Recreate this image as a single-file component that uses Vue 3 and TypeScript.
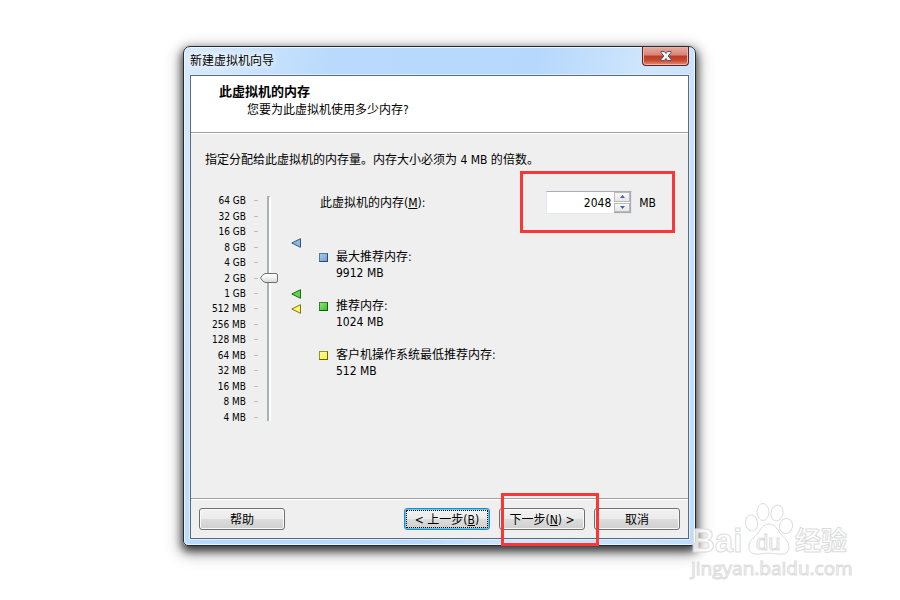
<script setup lang="ts">
import { computed, ref } from 'vue'

const labels = ['64 GB', '32 GB', '16 GB', '8 GB', '4 GB', '2 GB', '1 GB', '512 MB', '256 MB', '128 MB', '64 MB', '32 MB', '16 MB', '8 MB', '4 MB']
const legend = [
  { key: 'blue', name: '最大推荐内存:', value: 9912 },
  { key: 'green', name: '推荐内存:', value: 1024 },
  { key: 'yellow', name: '客户机操作系统最低推荐内存:', value: 512 },
]
const memory = ref(2048)

// The scale is logarithmic: 64 GB (2^16 MB) in the first row, 4 MB (2^2 MB) in the last.
function place(mb: number): string {
  const row = Math.min(14, Math.max(0, 16 - Math.log2(mb || 4)))
  return `${((row + 0.5) / 15) * 100}%`
}
const power = computed({
  get: () => Math.log2(memory.value || 4),
  set: (v: number) => { memory.value = 2 ** v },
})
function step(delta: number) {
  memory.value = Math.min(65536, Math.max(4, memory.value + delta))
}
</script>

<template>
  <main class="page">
    <section class="window">
      <header class="titlebar">
        <h1>新建虚拟机向导</h1>
        <button class="close" type="button" aria-label="关闭">
          <svg width="12" height="10" viewBox="0 0 12 10">
            <path d="M1 .5H4.4L6 2.5 7.6.5H11V1.5L8.2 5 11 8.5V9.5H7.6L6 7.5 4.4 9.5H1V8.5L3.8 5 1 1.5Z" fill="#f6f6f6" stroke="#51536a" />
          </svg>
        </button>
      </header>
      <div class="client">
        <div class="heading">
          <h2>此虚拟机的内存</h2>
          <p>您要为此虚拟机使用多少内存?</p>
        </div>
        <div class="body">
          <p class="intro">指定分配给此虚拟机的内存量。内存大小必须为 4 MB 的倍数。</p>
          <div class="columns">
            <div class="scale">
              <ul class="labels">
                <li v-for="l in labels" :key="l">{{ l }}</li>
              </ul>
              <div class="slider">
                <div class="track"></div>
                <svg class="thumb" :style="{ top: place(memory) }" width="20" height="12" viewBox="0 0 20 12">
                  <defs>
                    <linearGradient id="thumb-fill" x1="0" y1="0" x2="0" y2="1">
                      <stop offset="0" stop-color="#fff" />
                      <stop offset=".5" stop-color="#f2f2f2" />
                      <stop offset="1" stop-color="#d4d4d4" />
                    </linearGradient>
                  </defs>
                  <path d="M6 1.5H17Q18.500 1.500 18.500 3V9Q18.500 10.500 17 10.500H6Q3 9 1.500 6Q3 3 6 1.500Z" fill="url(#thumb-fill)" stroke="#717171" />
                </svg>
                <input v-model.number="power" type="range" min="2" max="16" step="1" aria-label="内存">
              </div>
              <div class="markers">
                <svg v-for="m in legend" :key="m.key" :class="['marker', m.key]" :style="{ top: place(m.value) }" width="10" height="10" viewBox="0 0 10 10">
                  <path d="M9.500 .7V9.300L.8 5Z" />
                </svg>
              </div>
            </div>
            <div class="info">
              <div class="field">
                <label for="memory">此虚拟机的内存(<u>M</u>):</label>
                <div class="amount">
                  <span class="spin">
                    <input id="memory" v-model.number="memory" type="text">
                    <span class="arrows">
                      <button type="button" aria-label="增加" @click="step(4)"><svg width="5" height="3" viewBox="0 0 5 3"><path d="M0 3L2.500 0 5 3Z" /></svg></button>
                      <button type="button" aria-label="减少" @click="step(-4)"><svg width="5" height="3" viewBox="0 0 5 3"><path d="M0 0L2.500 3 5 0Z" /></svg></button>
                    </span>
                  </span>
                  <span>MB</span>
                </div>
              </div>
              <ul class="legend">
                <li v-for="m in legend" :key="m.key">
                  <i :class="['swatch', m.key]"></i>
                  <p>{{ m.name }}<br>{{ m.value }} MB</p>
                </li>
              </ul>
            </div>
          </div>
        </div>
        <footer class="footer">
          <button class="btn" type="button">帮助</button>
          <div class="actions">
            <button class="btn current" type="button">&lt; 上一步(<u>B</u>)</button>
            <span class="next"><button class="btn" type="button">下一步(<u>N</u>) &gt;</button></span>
            <button class="btn" type="button">取消</button>
          </div>
        </footer>
      </div>
    </section>

    <svg class="watermark" width="168" height="84" viewBox="0 0 168 84">
      <g fill="#fff" fill-opacity=".8" stroke="#dcdcdc" stroke-width="1">
        <text class="brand" x="3" y="52">Bai</text>
        <ellipse cx="63.500" cy="23" rx="6" ry="8" transform="rotate(-10 63.500 23)" />
        <ellipse cx="75" cy="12" rx="6" ry="8.500" />
        <ellipse cx="89" cy="13" rx="6" ry="8" transform="rotate(12 89 13)" />
        <ellipse cx="98" cy="26" rx="6.500" ry="7.500" transform="rotate(15 98 26)" />
        <path d="M81 24C86 24 89 28 92 33C96 38 101 41 101 47C101 53 96 55 90 54C84 53 78 53 72 54C65 55 60 52 61 46C61 40 66 38 70 33C73 29 75 24 81 24Z" />
        <text class="du" x="68" y="50">du</text>
        <text class="cn" x="107" y="50">经验</text>
        <text class="url" x="3" y="75">jingyan.baidu.com</text>
      </g>
    </svg>
  </main>
</template>

<style>
body { margin: 0; background: #fff; }
</style>

<style scoped>
* { box-sizing: border-box; }
h1, h2, p, ul { margin: 0; padding: 0; list-style: none; }
button, input { font: inherit; color: inherit; padding: 0; margin: 0; }
.page {
  position: relative;
  min-height: 100vh;
  padding: 46px 204px 54px 183px;
  overflow: hidden;
  font: 12px/16px "DejaVu Sans Condensed", "Noto Sans CJK SC", sans-serif;
  color: #000;
}
.window {
  padding: 0 6px 6px;
  border: 1px solid #252b32;
  border-radius: 7px 7px 5px 5px;
  background: linear-gradient(105deg, #d8eafd 0, #b9dafc 24%, #b5d8fc 55%, #cfe5fc 72%, #bfddfb 100%);
  box-shadow: inset 0 0 0 1px #eaf5ff, 0 4px 9px 1px rgba(0, 0, 0, .7), 0 5px 16px 3px rgba(0, 0, 0, .3);
}
.titlebar { display: flex; justify-content: space-between; align-items: flex-start; height: 28px; }
.titlebar h1 { font-size: 12px; font-weight: 400; line-height: 28px; text-shadow: 0 0 6px #fff, 0 0 10px #fff; }
.close {
  display: flex;
  align-items: center;
  justify-content: center;
  width: 47px;
  height: 19px;
  border: 1px solid #5b2424;
  border-top: 0;
  border-radius: 0 0 4px 4px;
  background: linear-gradient(#e8aa9f 0, #d88474 45%, #bd3a24 50%, #c94a32 75%, #df9077 100%);
  box-shadow: inset 0 0 0 1px #e9b6a9;
}
.client { border: 1px solid #596a7c; background: #efefef; box-shadow: 0 0 0 1px #dceeff; }
.heading { padding: 7px 28px 13px; background: #fff; border-bottom: 1px solid #a0a0a0; line-height: 18px; }
.heading h2 { font-size: 13px; font-weight: 700; }
.heading p { padding-left: 28px; }
.body { padding: 17px 14px 73px; border-top: 1px solid #fff; }
.intro { line-height: 18px; }
.columns { display: flex; align-items: flex-start; margin-top: 22px; }
.scale { display: flex; height: 234px; padding-top: 2px; }
.labels { display: grid; grid-template-rows: repeat(15, 1fr); width: 53px; font-size: 10px; text-align: right; }
.labels li { display: flex; align-items: center; justify-content: flex-end; gap: 8px; line-height: 15px; white-space: nowrap; }
.labels li::after { content: ""; width: 4px; height: 1px; background: #bdbdbd; }
.slider { position: relative; width: 22px; padding: 3px 0 4px 9px; }
.track { width: 4px; height: 100%; border: 1px solid #a9b1ad; border-width: 1px 0 0 2px; border-right: 2px solid #fff; background: #e7eaea; }
.thumb { position: absolute; left: 1px; margin-top: -6px; }
.slider input { position: absolute; inset: 0; width: 100%; height: 100%; writing-mode: vertical-lr; direction: rtl; opacity: 0; cursor: pointer; }
.markers { position: relative; width: 34px; }
.marker { position: absolute; left: 11px; margin-top: -5px; }
.marker path { stroke-width: 1; }
.marker.blue path { fill: #8db9e4; stroke: #34577f; }
.marker.green path { fill: #65d34a; stroke: #146c16; }
.marker.yellow path { fill: #fff565; stroke: #77751a; }
.info { flex: 1; padding-left: 5px; }
.field { display: flex; align-items: center; justify-content: space-between; height: 23px; padding-left: 1px; }
.amount { position: relative; display: flex; align-items: center; gap: 7px; padding-right: 18px; }
.amount::after, .next::after { content: ""; position: absolute; border: 3px solid #fb3636; pointer-events: none; }
.amount::after { inset: -20px -1px -19px -26px; }
.spin { display: flex; width: 86px; height: 23px; border: 1px solid #e3e9f1; border-top-color: #abadb3; background: #fff; }
.spin input { flex: 1; min-width: 0; border: 0; padding-right: 3px; background: none; text-align: right; outline: 0; }
.arrows { display: flex; flex-direction: column; gap: 1px; width: 17px; border-right: 1px solid #aaa; border-bottom: 1px solid #aaa; }
.arrows button { flex: 1; display: flex; align-items: center; justify-content: center; border: 1px solid #b9b9b9; background: linear-gradient(#fafafa, #e6e6e6); }
.arrows path { fill: #4660a6; }
.legend { display: flex; flex-direction: column; gap: 17px; padding-top: 35px; }
.legend li { display: flex; gap: 8px; }
.swatch { width: 9px; height: 9px; margin-top: 4px; border: 1px solid; }
.swatch.blue { border-color: #5078a6 #284b76 #284b76 #5078a6; background: linear-gradient(135deg, #a9c9e9, #739fcc); }
.swatch.green { border-color: #268b25 #0b610e #0b610e #268b25; background: linear-gradient(135deg, #8ce575, #45bd2c); }
.swatch.yellow { border-color: #969223 #66640d #66640d #969223; background: linear-gradient(135deg, #fffbb0, #fff22c); }
.footer { display: flex; justify-content: space-between; padding: 9px 8px 8px; border-top: 1px solid #a0a0a0; box-shadow: inset 0 1px #fff; }
.actions { display: flex; gap: 9px; }
.next { position: relative; display: flex; }
.next::after { inset: -15px -14px -16px 2px; }
.btn {
  width: 86px;
  height: 22px;
  padding-top: 2px;
  border: 1px solid #707070;
  border-radius: 3px;
  background: linear-gradient(#f2f2f2 0, #ebebeb 49%, #dddddd 50%, #cfcfcf 100%);
  box-shadow: inset 0 0 0 1px #fafafa;
  line-height: 18px;
  white-space: nowrap;
}
.current { border-color: #3c7fb1; box-shadow: inset 0 0 0 1px #48d0fb; outline: 1px dotted #000; outline-offset: -3px; }
.watermark { position: absolute; right: 44px; bottom: 16px; pointer-events: none; }
.watermark text { font-family: "Liberation Sans", "Noto Sans CJK SC", sans-serif; }
.watermark .brand { font-size: 33px; font-weight: 700; }
.watermark .du { font-size: 22px; }
.watermark .cn { font-family: "Noto Sans CJK SC", sans-serif; font-size: 26px; font-weight: 700; }
.watermark .url { font-family: "Open Sans", sans-serif; font-size: 19px; }
</style>
